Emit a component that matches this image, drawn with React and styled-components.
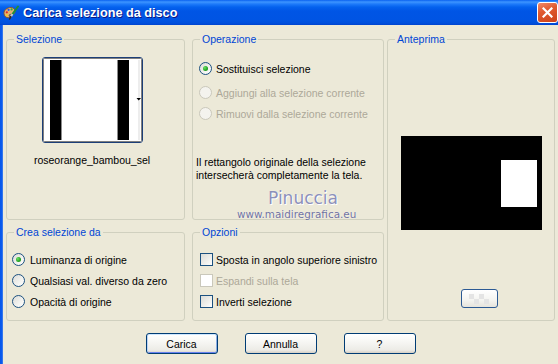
import React from 'react';
import styled, { createGlobalStyle, css } from 'styled-components';

const GlobalStyle = createGlobalStyle`
  html, body {
    margin: 0;
    padding: 0;
    background: #ECE9D8;
  }
`;

const Window = styled.div`
  position: relative;
  width: 558px;
  height: 364px;
  overflow: hidden;
  display: flex;
  flex-direction: column;
  background: #ECE9D8;
  font-family: "Liberation Sans", Arial, sans-serif;
  font-size: 10.5px;
  color: #000;
`;

const TitleBar = styled.div`
  flex: none;
  height: 25px;
  box-sizing: border-box;
  display: flex;
  align-items: center;
  padding: 0 0 0 3px;
  background: linear-gradient(
    to bottom,
    #0A62F0 0px,
    #3D95FF 2px,
    #1E7BFA 4px,
    #0462EE 7px,
    #0055E5 11px,
    #0054E3 20px,
    #0050DC 23px,
    #0043CF 25px
  );
`;

const Title = styled.div`
  margin-left: 4px;
  font-family: "Liberation Sans", Arial, sans-serif;
  font-weight: bold;
  font-size: 12.7px;
  color: #fff;
  text-shadow: 1px 1px 0 #0A1883;
`;

const CloseButton = styled.div`
  margin-left: auto;
  width: 21px;
  height: 21px;
  box-sizing: border-box;
  border: 1px solid #fff;
  border-radius: 3px;
  background: linear-gradient(160deg, #F08A6A 0%, #E0592F 40%, #CC4219 100%);
  display: flex;
  align-items: center;
  justify-content: center;
`;

const Body = styled.div`
  flex: 1;
  display: flex;
`;

const LeftFrame = styled.div`
  width: 3px;
  background: linear-gradient(to right, #0756E8 0, #0B5CF0 2px, #5B8FE8 3px);
`;

const Client = styled.div`
  flex: 1;
  padding: 14px 3px 0 3px;
  display: flex;
  flex-direction: column;
`;

const Panels = styled.div`
  display: grid;
  grid-template-columns: 186px 195px 168px;
  grid-template-rows: 181px 89px;
  row-gap: 12px;
  grid-template-areas:
    "sel op prev"
    "crea opt prev";
`;

const GroupBox = styled.div`
  grid-area: ${(p) => p.$area};
  width: ${(p) => p.$width}px;
  position: relative;
  box-sizing: border-box;
  border: 1px solid #D0D0BF;
  border-radius: 3px;
  padding: ${(p) => p.$pad};
  display: flex;
  flex-direction: column;
  align-items: ${(p) => p.$align || 'flex-start'};
`;

const Legend = styled.span`
  position: absolute;
  top: -7px;
  left: 7px;
  padding: 0 2px;
  line-height: 13px;
  background: #ECE9D8;
  color: #0046D5;
`;

const ThumbButton = styled.div`
  width: 101px;
  height: 86px;
  box-sizing: border-box;
  border: 1px solid #1C3F78;
  border-radius: 3px;
  background: #fff;
  overflow: hidden;
`;

const FileName = styled.div`
  margin-top: 11px;
  line-height: 13px;
`;

const OptionRow = styled.div`
  display: flex;
  align-items: center;
  height: 21px;
  gap: ${(p) => p.$gap || 4}px;
  margin-bottom: ${(p) => p.$after || 0}px;
  color: ${(p) => (p.$disabled ? '#ACA899' : '#000')};
  white-space: nowrap;
`;

const Radio = styled.span`
  flex: none;
  width: 13px;
  height: 13px;
  box-sizing: border-box;
  border-radius: 50%;
  display: flex;
  align-items: center;
  justify-content: center;
  border: 1px solid ${(p) => (p.$disabled ? '#CAC8BB' : '#1C5180')};
  background: ${(p) =>
    p.$disabled ? '#F4F3EE' : 'linear-gradient(135deg, #DCDCD7 0%, #F3F3F0 60%, #fff 100%)'};
  ${(p) =>
    p.$checked &&
    css`
      &::after {
        content: '';
        width: 5px;
        height: 5px;
        border-radius: 50%;
        background: radial-gradient(circle at 35% 35%, #6BE266 0%, #21A121 60%, #1A8C1A 100%);
      }
    `}
`;

const Checkbox = styled.span`
  flex: none;
  width: 13px;
  height: 13px;
  box-sizing: border-box;
  border: 1px solid ${(p) => (p.$disabled ? '#CAC8BB' : '#1C5180')};
  background: ${(p) =>
    p.$disabled ? '#FFFFFF' : 'linear-gradient(135deg, #DCDCD7 0%, #F0F0EC 60%, #fff 100%)'};
`;

const Description = styled.div`
  margin-top: 32px;
  margin-left: -3px;
  line-height: 13px;
`;

const PreviewSmallButton = styled.div`
  margin-top: 59px;
  margin-left: 16px;
  width: 37px;
  height: 19px;
  box-sizing: border-box;
  border: 1px solid #2C5A94;
  border-radius: 3px;
  background: linear-gradient(#FFFFFF, #F4F4F0 60%, #E6E4DC);
  display: flex;
  align-items: center;
  justify-content: center;
`;

const ButtonRow = styled.div`
  margin-top: 12px;
  display: flex;
  justify-content: center;
  gap: 27px;
`;

const DialogButton = styled.div`
  width: 72px;
  height: 21px;
  box-sizing: border-box;
  border: 1px solid #003C74;
  border-radius: 3px;
  display: flex;
  align-items: center;
  justify-content: center;
  background: linear-gradient(#FFFFFF 0%, #F7F7F4 40%, #ECEBE6 85%, #D6D0C5 100%);
  ${(p) =>
    p.$default &&
    css`
      box-shadow: inset 0 1px 0 #CEE7FF, inset 1px 0 0 #BCD4F6, inset -1px 0 0 #89ADE4,
        inset 0 -1px 0 #6982EE;
    `}
`;

const Watermark = styled.div`
  position: absolute;
  left: 237px;
  top: 189px;
  pointer-events: none;
  font-family: "DejaVu Sans", Verdana, sans-serif;
`;

const WatermarkName = styled.div`
  margin-left: 31px;
  font-size: 17px;
  line-height: 18px;
  color: #8C90BA;
  text-shadow: 0 0 1px #fff, 1px 1px 0 #fff;
`;

const WatermarkSite = styled.div`
  margin-top: 1px;
  font-size: 10.4px;
  line-height: 12px;
  color: #6F719F;
  text-shadow: 0 0 1px #fff;
`;

const PaletteIcon = () => (
  <svg width="16" height="16" viewBox="0 0 16 16">
    <path
      d="M8 2.5C4 2.5 1 5 1 8.3c0 2.6 2 4.4 4.3 4.4 1.2 0 1.4-0.9 1-1.7-0.5-1 0.1-1.7 1.1-1.6 2.6 0.3 4.6-0.6 4.6-3 0-2.3-1.9-3.9-4-3.9z"
      fill="#E2B270"
      stroke="#8A5426"
      strokeWidth="0.9"
    />
    <circle cx="3.8" cy="7.3" r="1.1" fill="#E02828" />
    <circle cx="5.6" cy="4.8" r="1.1" fill="#2452E6" />
    <circle cx="8.6" cy="4.4" r="1.1" fill="#2EA644" />
    <circle cx="4" cy="10.2" r="1" fill="#F2D21E" />
    <path d="M15 1.5L9.5 9" stroke="#1D8F3A" strokeWidth="2" strokeLinecap="round" />
    <path d="M9.5 9L7.8 11.6" stroke="#C8C8C8" strokeWidth="2" />
    <path d="M7.8 11.6L6.6 14" stroke="#3A2A1A" strokeWidth="1.6" strokeLinecap="round" />
  </svg>
);

const CloseGlyph = () => (
  <svg width="11" height="11" viewBox="0 0 11 11">
    <path d="M1.5 1.5L9.5 9.5M9.5 1.5L1.5 9.5" stroke="#fff" strokeWidth="2.2" strokeLinecap="square" />
  </svg>
);

const ThumbImage = () => (
  <svg width="99" height="84" viewBox="0 0 99 84">
    <rect x="0" y="0" width="99" height="84" fill="#fff" />
    <rect x="95" y="2" width="2" height="80" fill="#EDEDED" />
    <rect x="7" y="2" width="11" height="80" fill="#000" />
    <rect x="18" y="2" width="1" height="80" fill="#8C8C8C" />
    <rect x="75" y="2" width="11" height="80" fill="#000" />
    <rect x="74" y="2" width="1" height="80" fill="#8C8C8C" />
    <polygon points="93.5,40 98,40 95.75,42.5" fill="#000" />
    <rect
      x="0.5"
      y="0.5"
      width="98"
      height="83"
      fill="none"
      stroke="#000"
      strokeWidth="1"
      strokeDasharray="1 1"
    />
  </svg>
);

const PreviewImage = () => (
  <svg width="141" height="94" viewBox="0 0 141 94">
    <rect x="0" y="0" width="141" height="94" fill="#000" />
    <rect x="100" y="24" width="36" height="47" fill="#fff" />
  </svg>
);

const CheckerGlyph = () => (
  <svg width="20" height="10" viewBox="0 0 20 10">
    {[0, 1, 2, 3].map((c) =>
      [0, 1].map((r) =>
        (c + r) % 2 === 0 ? (
          <rect key={`${c}-${r}`} x={c * 5} y={r * 5} width="5" height="5" fill="#E4E4E4" />
        ) : null
      )
    )}
  </svg>
);

const operations = [
  { label: 'Sostituisci selezione', checked: true, after: 3 },
  { label: 'Aggiungi alla selezione corrente', disabled: true },
  { label: 'Rimuovi dalla selezione corrente', disabled: true },
];

const sources = [
  { label: 'Luminanza di origine', checked: true },
  { label: 'Qualsiasi val. diverso da zero' },
  { label: 'Opacità di origine' },
];

const options = [
  { label: 'Sposta in angolo superiore sinistro' },
  { label: 'Espandi sulla tela', disabled: true },
  { label: 'Inverti selezione' },
];

export default function App() {
  return (
    <Window>
      <GlobalStyle />
      <TitleBar>
        <PaletteIcon />
        <Title>Carica selezione da disco</Title>
        <CloseButton>
          <CloseGlyph />
        </CloseButton>
      </TitleBar>
      <Body>
        <LeftFrame />
        <Client>
          <Panels>
            <GroupBox $area="sel" $width={179} $pad="17px 7px 0 0" $align="center">
              <Legend>Selezione</Legend>
              <ThumbButton>
                <ThumbImage />
              </ThumbButton>
              <FileName>roseorange_bambou_sel</FileName>
            </GroupBox>

            <GroupBox $area="op" $width={192} $pad="18px 0 0 6px">
              <Legend>Operazione</Legend>
              {operations.map((o) => (
                <OptionRow key={o.label} $disabled={o.disabled} $after={o.after}>
                  <Radio $checked={o.checked} $disabled={o.disabled} />
                  {o.label}
                </OptionRow>
              ))}
              <Description>
                Il rettangolo originale della selezione
                <br />
                intersecherà completamente la tela.
              </Description>
            </GroupBox>

            <GroupBox $area="prev" $width={168} $pad="96px 0 0 0" $align="center">
              <Legend>Anteprima</Legend>
              <PreviewImage />
              <PreviewSmallButton>
                <CheckerGlyph />
              </PreviewSmallButton>
            </GroupBox>

            <GroupBox $area="crea" $width={179} $pad="16px 0 0 5px">
              <Legend>Crea selezione da</Legend>
              {sources.map((o) => (
                <OptionRow key={o.label} $gap={5}>
                  <Radio $checked={o.checked} />
                  {o.label}
                </OptionRow>
              ))}
            </GroupBox>

            <GroupBox $area="opt" $width={192} $pad="16px 0 0 7px">
              <Legend>Opzioni</Legend>
              {options.map((o) => (
                <OptionRow key={o.label} $gap={3} $disabled={o.disabled}>
                  <Checkbox $disabled={o.disabled} />
                  {o.label}
                </OptionRow>
              ))}
            </GroupBox>
          </Panels>

          <ButtonRow>
            <DialogButton $default>Carica</DialogButton>
            <DialogButton>Annulla</DialogButton>
            <DialogButton>?</DialogButton>
          </ButtonRow>
        </Client>
      </Body>
      <Watermark>
        <WatermarkName>Pinuccia</WatermarkName>
        <WatermarkSite>www.maidiregrafica.eu</WatermarkSite>
      </Watermark>
    </Window>
  );
}
